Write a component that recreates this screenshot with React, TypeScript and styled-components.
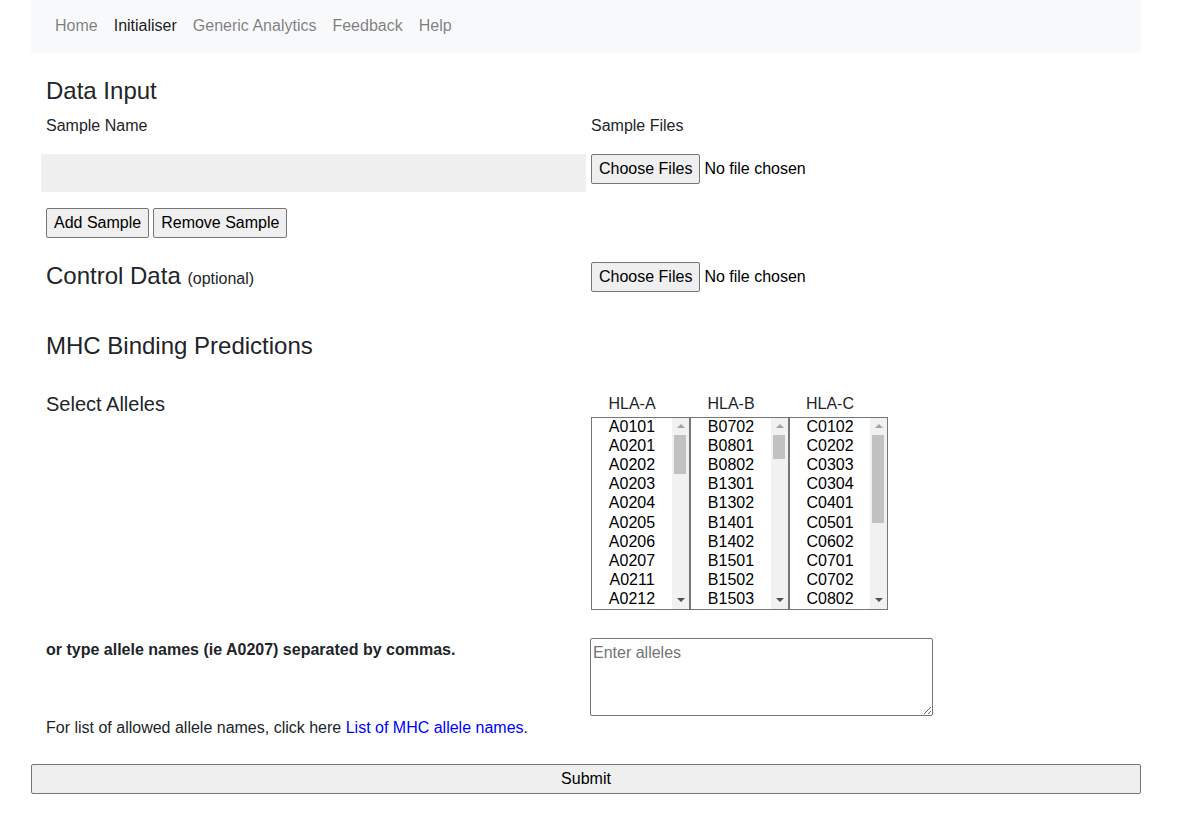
import React from "react";
import styled, { createGlobalStyle } from "styled-components";

const GlobalStyle = createGlobalStyle`
  html, body { margin: 0; padding: 0; background: #fff; }
  body {
    font-family: "Liberation Sans", Arial, sans-serif;
    font-size: 16px;
    line-height: 1.5;
    color: #212529;
  }
  * { box-sizing: border-box; }
`;

const Container = styled.div`
  width: 1110px;
  margin-left: 31px;
`;

const Navbar = styled.nav`
  height: 53px;
  background: #f8f9fa;
  display: flex;
  align-items: center;
  padding: 0 16px 2px;
`;

const NavLink = styled.a<{ $active?: boolean }>`
  padding: 0 8px;
  font-size: 16px;
  line-height: 24px;
  text-decoration: none;
  cursor: pointer;
  color: ${(p) => (p.$active ? "rgba(0,0,0,0.9)" : "rgba(0,0,0,0.5)")};
`;

const Form = styled.form`
  padding-left: 15px;
  display: flex;
  flex-direction: column;
`;

const Row = styled.div<{ $mt?: number }>`
  display: grid;
  grid-template-columns: 545px 1fr;
  align-items: start;
  margin-top: ${(p) => p.$mt ?? 0}px;
`;

const Heading = styled.h4<{ $size?: number }>`
  margin: 0;
  font-weight: 500;
  font-size: ${(p) => p.$size ?? 24}px;
  line-height: 1.2;
`;

const Label = styled.div<{ $bold?: boolean }>`
  font-size: 16px;
  line-height: 24px;
  font-weight: ${(p) => (p.$bold ? 700 : 400)};
`;

const Small = styled.span`
  font-size: 16px;
  font-weight: 400;
`;

const NameField = styled.input`
  display: block;
  margin-left: -5px;
  width: 545px;
  height: 38px;
  border: none;
  background: #f0f0f0;
  font: inherit;
  padding: 0 8px;
  outline: none;
`;

const Button = styled.button`
  font-family: "Liberation Sans", Arial, sans-serif;
  font-size: 16px;
  line-height: 24px;
  height: 30px;
  padding: 2px 7px;
  color: #000;
  background: #efefef;
  border: 1px solid #767676;
  border-radius: 2px;
  cursor: pointer;
`;

const ButtonGroup = styled.div`
  display: flex;
  gap: 4px;
`;

const FileField = styled.div`
  display: flex;
  align-items: center;
  gap: 4px;
`;

const FileText = styled.span`
  font-size: 16px;
  line-height: 24px;
  color: #000;
`;

const AlleleGrid = styled.div`
  display: flex;
`;

const AlleleColumn = styled.div`
  display: flex;
  flex-direction: column;
  width: 99px;
`;

const AlleleLabel = styled.div`
  text-align: center;
  padding-right: 17px;
  font-size: 16px;
  line-height: 24px;
  margin-bottom: 1px;
`;

const ListBox = styled.div`
  display: flex;
  width: 99px;
  height: 193px;
  border: 1px solid #767676;
  background: #fff;
`;

const AlleleSelect = styled.select`
  flex: 1;
  min-width: 0;
  height: 100%;
  border: none;
  border-radius: 0;
  padding: 0;
  font-family: "Liberation Sans", Arial, sans-serif;
  font-size: 16px;
  color: #000;
  background: #fff;
  text-align: center;
  text-align-last: center;
  outline: none;
  overflow: hidden;

  option {
    text-align: center;
    padding: 0 2px 1px;
  }
`;

const ScrollTrack = styled.div`
  width: 17px;
  flex: none;
  background: #f1f1f1;
  display: flex;
  flex-direction: column;
`;

const ScrollArrow = styled.div<{ $down?: boolean }>`
  height: 17px;
  flex: none;
  display: flex;
  align-items: center;
  justify-content: center;
  &::after {
    content: "";
    width: 0;
    height: 0;
    border-left: 4px solid transparent;
    border-right: 4px solid transparent;
    ${(p) =>
      p.$down
        ? "border-top: 4px solid #505050;"
        : "border-bottom: 4px solid #a3a3a3;"}
  }
`;

const ScrollRail = styled.div`
  flex: 1;
  padding: 0 3px 0 2px;
`;

const ScrollThumb = styled.div`
  background: #c1c1c1;
  width: 100%;
`;

const AlleleInput = styled.textarea`
  display: block;
  margin-left: -1px;
  width: 343px;
  height: 78px;
  border: 1px solid #767676;
  border-radius: 2px;
  padding: 2px;
  font-family: "Liberation Sans", Arial, sans-serif;
  font-size: 16px;
  line-height: 24px;
  outline: none;
  &::placeholder {
    color: #757575;
  }
`;

const Note = styled.p`
  margin: 0;
  font-size: 16px;
  line-height: 24px;
`;

const Link = styled.a`
  color: #0000ff;
  text-decoration: none;
`;

const SubmitButton = styled(Button)`
  width: 1110px;
  margin: 24px 0 0 -15px;
  text-align: center;
`;

const alleleA = [
  "A0101", "A0201", "A0202", "A0203", "A0204", "A0205", "A0206", "A0207", "A0211", "A0212",
  "A0216", "A0217", "A0219", "A0250", "A0301", "A0302", "A1101", "A1102", "A2301", "A2402",
  "A2403", "A2501", "A2601", "A2602", "A2603", "A2902", "A3001", "A3002", "A3101", "A3201",
  "A3207", "A3215", "A3301", "A6601", "A6801", "A6802", "A6823", "A6901", "A8001",
];

const alleleB = [
  "B0702", "B0801", "B0802", "B1301", "B1302", "B1401", "B1402", "B1501", "B1502", "B1503",
  "B1509", "B1510", "B1512", "B1513", "B1516", "B1517", "B1518", "B1801", "B1802", "B2705",
  "B2709", "B2720", "B3501", "B3503", "B3508", "B3701", "B3801", "B3901", "B3906", "B4001",
  "B4002", "B4006", "B4013", "B4101", "B4201", "B4402", "B4403", "B4501", "B4506", "B4601",
  "B4701", "B4801", "B4901", "B5001", "B5101", "B5201", "B5301", "B5401", "B5501", "B5502",
  "B5601", "B5701", "B5703", "B5801", "B5802", "B5901", "B6701", "B7301", "B7801", "B8101",
  "B8201", "B8301", "B1508", "B1520", "B3502", "B4405",
];

const alleleC = [
  "C0102", "C0202", "C0303", "C0304", "C0401", "C0501", "C0602", "C0701", "C0702", "C0802",
  "C1203", "C1402", "C1502", "C1601", "C1701", "C1802", "C0801", "C1202",
];

const columns = [
  { label: "HLA-A", items: alleleA, thumb: 39 },
  { label: "HLA-B", items: alleleB, thumb: 24 },
  { label: "HLA-C", items: alleleC, thumb: 88 },
];

export default function App() {
  return (
    <>
      <GlobalStyle />
      <Container>
        <Navbar>
          <NavLink>Home</NavLink>
          <NavLink $active>Initialiser</NavLink>
          <NavLink>Generic Analytics</NavLink>
          <NavLink>Feedback</NavLink>
          <NavLink>Help</NavLink>
        </Navbar>
        <Form onSubmit={(e) => e.preventDefault()}>
          <Row $mt={24}>
            <Heading>Data Input</Heading>
          </Row>
          <Row $mt={8}>
            <Label>Sample Name</Label>
            <Label>Sample Files</Label>
          </Row>
          <Row $mt={16}>
            <NameField type="text" />
            <FileField>
              <Button type="button">Choose Files</Button>
              <FileText>No file chosen</FileText>
            </FileField>
          </Row>
          <Row $mt={16}>
            <ButtonGroup>
              <Button type="button">Add Sample</Button>
              <Button type="button">Remove Sample</Button>
            </ButtonGroup>
          </Row>
          <Row $mt={24}>
            <Heading>
              Control Data <Small>(optional)</Small>
            </Heading>
            <FileField>
              <Button type="button">Choose Files</Button>
              <FileText>No file chosen</FileText>
            </FileField>
          </Row>
          <Row $mt={40}>
            <Heading>MHC Binding Predictions</Heading>
          </Row>
          <Row $mt={31}>
            <Heading $size={20}>Select Alleles</Heading>
            <AlleleGrid>
              {columns.map((col) => (
                <AlleleColumn key={col.label}>
                  <AlleleLabel>{col.label}</AlleleLabel>
                  <ListBox>
                    <AlleleSelect multiple size={10}>
                      {col.items.map((a) => (
                        <option key={a} value={a}>
                          {a}
                        </option>
                      ))}
                    </AlleleSelect>
                    <ScrollTrack>
                      <ScrollArrow />
                      <ScrollRail>
                        <ScrollThumb style={{ height: col.thumb }} />
                      </ScrollRail>
                      <ScrollArrow $down />
                    </ScrollTrack>
                  </ListBox>
                </AlleleColumn>
              ))}
            </AlleleGrid>
          </Row>
          <Row $mt={28}>
            <Label $bold>or type allele names (ie A0207) separated by commas.</Label>
            <AlleleInput placeholder="Enter alleles" />
          </Row>
          <Row>
            <Note>
              For list of allowed allele names, click here <Link href="#">List of MHC allele names</Link>.
            </Note>
          </Row>
          <SubmitButton type="submit">Submit</SubmitButton>
        </Form>
      </Container>
    </>
  );
}
